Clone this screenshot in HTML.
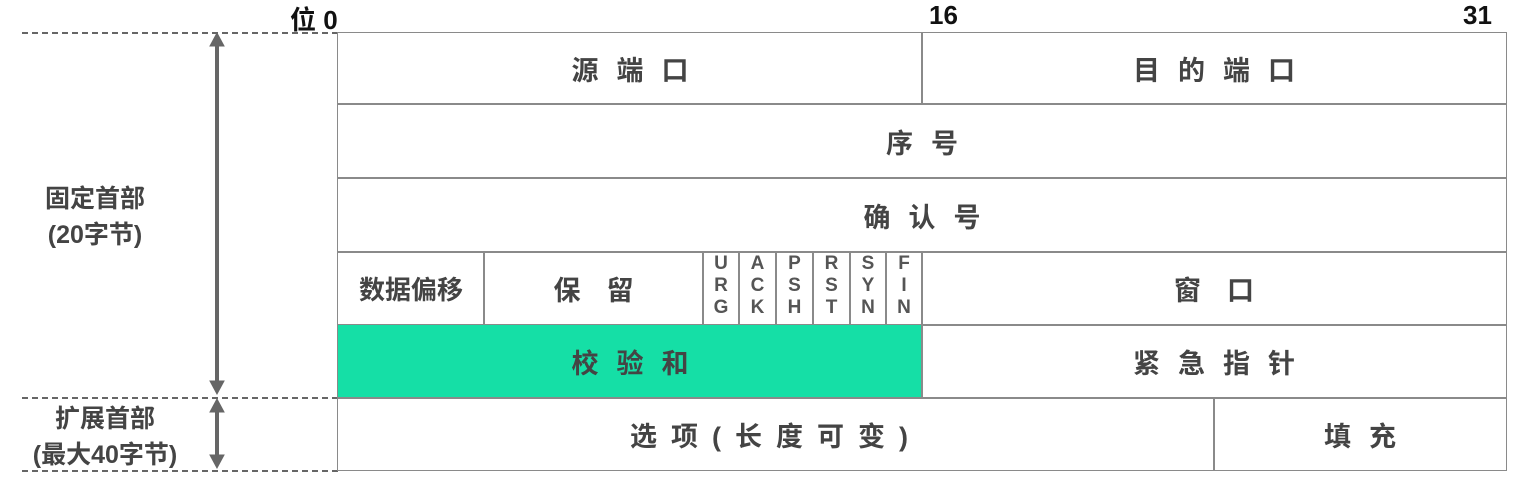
<!DOCTYPE html>
<html><head><meta charset="utf-8"><style>
body{margin:0;width:1527px;height:484px;background:#fff;position:relative;overflow:hidden;font-family:"Liberation Sans","Noto Sans CJK SC",sans-serif;}
.c{position:absolute;border:1.5px solid #8a8a8a;box-sizing:border-box;display:flex;align-items:center;justify-content:center;color:#444;font-weight:bold;font-size:27px;letter-spacing:18px;padding-left:18px;}
.f{position:absolute;border:1.5px solid #8a8a8a;box-sizing:border-box;color:#555;font-weight:bold;font-size:19px;line-height:22px;text-align:center;padding-top:1px;}
.t{position:absolute;font-weight:bold;color:#111;font-size:26px;}
.l{position:absolute;color:#444;font-weight:bold;font-size:25px;text-align:center;line-height:36px;}
.d{position:absolute;height:0;border-top:2px dashed #666;}
</style></head><body>
<div class="t" style="left:290px;top:0px">位 0</div>
<div class="t" style="left:929px;top:0px">16</div>
<div class="t" style="left:1463px;top:0px">31</div>
<div class="d" style="left:22px;top:32px;width:316px"></div>
<div class="d" style="left:22px;top:397px;width:316px"></div>
<div class="d" style="left:22px;top:470px;width:316px"></div>
<svg style="position:absolute;left:205px;top:30px" width="26" height="445">
<g fill="#666" stroke="#666">
<line x1="12" y1="10" x2="12" y2="356" stroke-width="4"/>
<polygon points="12,3 5,16 19,16" />
<polygon points="12,364 5,351 19,351"/>
<line x1="12" y1="378" x2="12" y2="430" stroke-width="4"/>
<polygon points="12,369 5,382 19,382"/>
<polygon points="12,438 5,425 19,425"/>
</g></svg>
<div class="l" style="left:30px;top:181px;width:130px">固定首部<br>(20字节)</div>
<div class="l" style="left:20px;top:401px;width:170px">扩展首部<br>(最大40字节)</div>

<div class="c" style="left:337px;top:32px;width:586px;height:73px">源端口</div>
<div class="c" style="left:921px;top:32px;width:586px;height:73px">目的端口</div>
<div class="c" style="left:337px;top:103px;width:1170px;height:76px">序号</div>
<div class="c" style="left:337px;top:177px;width:1170px;height:76px">确认号</div>
<div class="c" style="left:337px;top:251px;width:148px;height:75px;letter-spacing:0;padding-left:0;font-size:26px">数据偏移</div>
<div class="c" style="left:483px;top:251px;width:221px;height:75px;letter-spacing:26px;padding-left:26px">保留</div>
<div class="f" style="left:702px;top:251px;width:38px;height:75px">U<br>R<br>G</div>
<div class="f" style="left:738px;top:251px;width:39px;height:75px">A<br>C<br>K</div>
<div class="f" style="left:775px;top:251px;width:39px;height:75px">P<br>S<br>H</div>
<div class="f" style="left:812px;top:251px;width:39px;height:75px">R<br>S<br>T</div>
<div class="f" style="left:849px;top:251px;width:38px;height:75px">S<br>Y<br>N</div>
<div class="f" style="left:885px;top:251px;width:38px;height:75px">F<br>I<br>N</div>
<div class="c" style="left:921px;top:251px;width:586px;height:75px;letter-spacing:26px;padding-left:26px">窗口</div>
<div class="c" style="left:337px;top:324px;width:586px;height:75px;background:#15dfa6">校验和</div>
<div class="c" style="left:921px;top:324px;width:586px;height:75px">紧急指针</div>
<div class="c" style="left:337px;top:397px;width:878px;height:74px;letter-spacing:14px;padding-left:0">选项(长度可变)</div>
<div class="c" style="left:1213px;top:397px;width:294px;height:74px">填充</div>
</body></html>
